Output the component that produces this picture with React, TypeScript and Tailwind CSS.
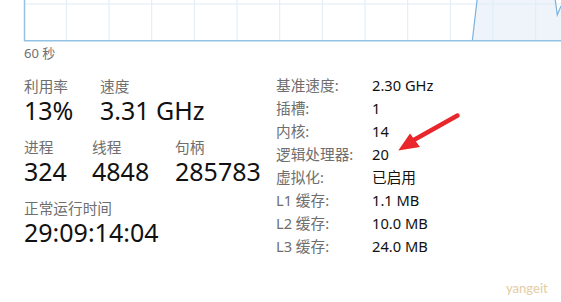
const gridXs = [66.3, 109, 151.7, 194.3, 237, 279.7, 322.3, 365, 407.7, 450.3, 493, 535.7];

const specs = [
  { k: "基准速度:", v: "2.30 GHz" },
  { k: "插槽:", v: "1" },
  { k: "内核:", v: "14" },
  { k: "逻辑处理器:", v: "20" },
  { k: "虚拟化:", v: "已启用" },
  { k: "L1 缓存:", v: "1.1 MB" },
  { k: "L2 缓存:", v: "10.0 MB" },
  { k: "L3 缓存:", v: "24.0 MB" },
];

function Stat({ label, value, w }: { label: string; value: string; w: string }) {
  return (
    <div className={`${w} shrink-0 whitespace-nowrap`}>
      <div className="h-[18px] text-[14.67px] leading-[18px] text-[#6e6e6e]">{label}</div>
      <div className="h-[30px] text-[25px] leading-[30px] text-[#111]">{value}</div>
    </div>
  );
}

function Chart() {
  return (
    <svg width="561" height="42" className="block">
      <polygon points="472.3,41 477.3,-2 555,-2 557.3,15 561,6 561,41" fill="#eef4f9" />
      <line x1="24" y1="4" x2="561" y2="4" stroke="#dfecf6" strokeWidth="1" />
      {gridXs.map((x) => (
        <line key={x} x1={x} y1="0" x2={x} y2="41" stroke="#dfecf6" strokeWidth="1" />
      ))}
      <polyline points="472.3,41 477.3,-2 555,-2 557.3,15 561,6" fill="none" stroke="#7ab3dc" strokeWidth="1.2" />
      <line x1="24.5" y1="0" x2="24.5" y2="41" stroke="#94c2e4" strokeWidth="1.5" />
      <line x1="24" y1="40.8" x2="561" y2="40.8" stroke="#94c2e4" strokeWidth="1.5" />
    </svg>
  );
}

export default function App() {
  return (
    <div className="relative w-[561px] h-[302px] overflow-hidden bg-white font-['Noto_Sans','Noto_Sans_CJK_SC',sans-serif]">
      <Chart />
      <div className="h-[16px] pl-[24px] mt-[3px] text-[13px] leading-[16px] text-[#707070]">60 秒</div>

      <div className="flex mt-[13px]">
        <div className="w-[276px] shrink-0 pl-[24px] pt-[3px]">
          <div className="flex">
            <Stat label="利用率" value="13%" w="w-[76px]" />
            <Stat label="速度" value="3.31 GHz" w="w-[110px]" />
          </div>
          <div className="flex mt-[13px]">
            <Stat label="进程" value="324" w="w-[68px]" />
            <Stat label="线程" value="4848" w="w-[83px]" />
            <Stat label="句柄" value="285783" w="w-[90px]" />
          </div>
          <div className="mt-[13px]">
            <Stat label="正常运行时间" value="29:09:14:04" w="w-[200px]" />
          </div>
        </div>

        <div className="grid grid-cols-[96px_auto] text-[14.67px] leading-[23px] whitespace-nowrap">
          {specs.map((s) => (
            <div key={s.k} className="contents">
              <div className="h-[23px] text-[#6e6e6e]">{s.k}</div>
              <div className="h-[23px] text-[#111]">{s.v}</div>
            </div>
          ))}
        </div>
      </div>

      <div className="absolute left-[506px] top-[279px] text-[13px] font-medium text-[#e4cfa8] font-['Lato',sans-serif]">yangeit</div>

      <svg className="absolute left-0 top-0" width="561" height="302">
        <line x1="457.5" y1="115.5" x2="412" y2="141" stroke="#e8262b" strokeWidth="4.5" strokeLinecap="round" />
        <polygon points="398.3,150.5 410,133.5 420,147" fill="#e8262b" />
      </svg>
    </div>
  );
}
